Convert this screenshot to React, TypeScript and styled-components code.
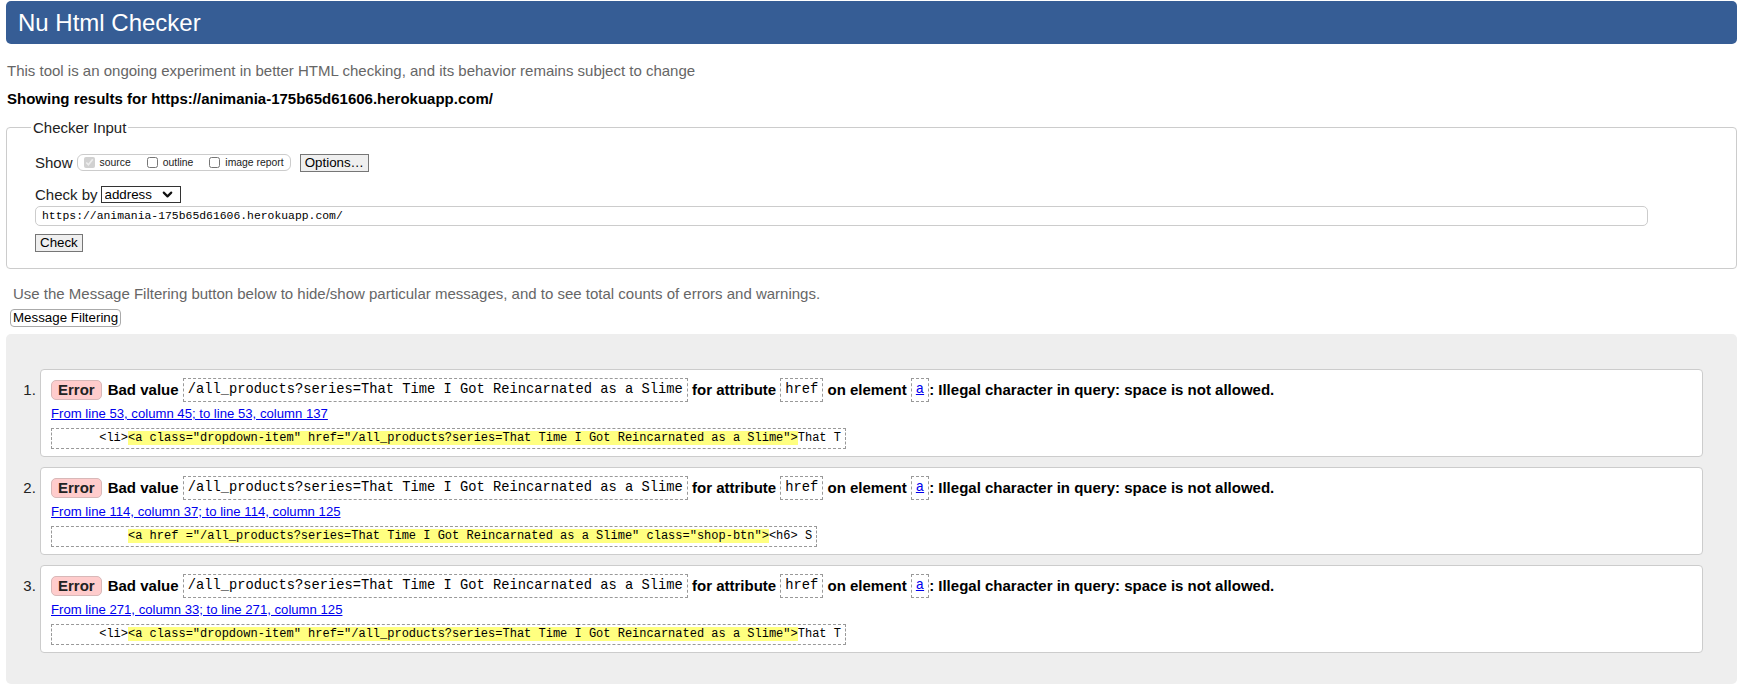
import React from 'react';
import styled, { createGlobalStyle } from 'styled-components';
import { ChevronDown } from 'lucide-react';

const GlobalStyle = createGlobalStyle`
  html, body {
    margin: 0;
    padding: 0;
    background: #fff;
  }
  body {
    padding: 1px 5px 0 6px;
    font-family: "Liberation Sans", Arial, sans-serif;
    font-size: 15px;
    color: #000;
  }
`;

const MONO = `"Liberation Mono", "DejaVu Sans Mono", monospace`;

const TitleBar = styled.header`
  height: 43px;
  border-radius: 5px;
  background: #365d95;
  color: #fff;
  display: flex;
  align-items: center;
  padding-left: 12px;
  h1 {
    margin: 0;
    font-size: 24px;
    font-weight: normal;
  }
`;

const Intro = styled.p<{ $bold?: boolean; $gap: number; $indent?: number }>`
  margin: ${(p) => p.$gap}px 0 0;
  padding-left: ${(p) => p.$indent ?? 1}px;
  line-height: 17px;
  color: ${(p) => (p.$bold ? '#000' : '#666')};
  font-weight: ${(p) => (p.$bold ? 'bold' : 'normal')};
`;

const InputSet = styled.fieldset`
  margin: 12px 0 0;
  padding: 17px 27px 16px 28px;
  border: 1px solid #ccc;
  border-radius: 4px;
  legend {
    padding: 0 2px;
    margin-left: -4px;
    line-height: 17px;
    color: #222;
  }
`;

const Row = styled.div<{ $gap?: number }>`
  display: flex;
  align-items: center;
  height: 19px;
  margin-top: ${(p) => p.$gap ?? 0}px;
  color: #222;
`;

const OptionGroup = styled.span`
  display: inline-flex;
  align-items: center;
  height: 15px;
  margin-left: 4px;
  padding: 0 6px;
  border: 1px solid #ccc;
  border-radius: 6px;
  label {
    display: inline-flex;
    align-items: center;
    font-size: 10.4px;
    color: #222;
    margin-right: 16px;
    &:last-child {
      margin-right: 0;
    }
  }
  input {
    width: 11px;
    height: 11px;
    margin: 0 5px 0 0;
  }
`;

const PlainButton = styled.button<{ $rounded?: boolean; $pad?: number }>`
  font-family: "Liberation Sans", Arial, sans-serif;
  font-size: 13.33px;
  height: 18px;
  padding: 0 ${(p) => p.$pad ?? 4}px;
  color: #000;
  line-height: 16px;
  border: 1px solid ${(p) => (p.$rounded ? '#aaa' : '#767676')};
  border-radius: ${(p) => (p.$rounded ? '4px' : '0')};
  background: ${(p) => (p.$rounded ? '#fff' : '#efefef')};
`;

const SelectBox = styled.span`
  display: inline-flex;
  align-items: center;
  width: 80px;
  height: 17px;
  box-sizing: border-box;
  margin-left: 3px;
  border: 1px solid #333;
  background: #fff;
  padding: 0 5px 0 3px;
  select {
    appearance: none;
    border: 0;
    padding: 0;
    flex: 1;
    min-width: 0;
    background: transparent;
    font-family: "Liberation Sans", Arial, sans-serif;
    font-size: 13.33px;
    color: #000;
    outline: none;
  }
`;

const UrlField = styled.input`
  display: block;
  box-sizing: border-box;
  width: 1613px;
  height: 20px;
  margin-top: 2px;
  padding: 0 6px;
  border: 1px solid #ccc;
  border-radius: 5px;
  font-family: ${MONO};
  font-size: 11.4px;
  color: #000;
`;

const Results = styled.section`
  margin-top: 7px;
  padding: 35px 34px 31px;
  background: #eee;
  border-radius: 5px;
`;

const MessageList = styled.ol`
  margin: 0;
  padding: 0;
`;

const Message = styled.li`
  background: #fff;
  border: 1px solid #ccc;
  border-radius: 4px;
  padding: 7px 10px;
  color: #222;
  & + & {
    margin-top: 10px;
  }
`;

const Headline = styled.p`
  margin: 0;
  line-height: 26px;
  font-weight: bold;
  color: #000;
`;

const Badge = styled.strong`
  display: inline-block;
  line-height: 18px;
  padding: 0 6px;
  margin-right: 6px;
  border: 1px solid #d8b8b8;
  border-radius: 5px;
  background: #fcc;
  color: #222;
`;

const Code = styled.code`
  display: inline-block;
  vertical-align: middle;
  margin-top: -2px;
  padding: 3px 4px;
  line-height: 16px;
  border: 1px dashed #999;
  font-family: ${MONO};
  font-size: 13.75px;
  font-weight: normal;
  color: #000;
  a {
    color: #00e;
  }
`;

const Location = styled.p`
  margin: 0;
  line-height: 22px;
  font-size: 13.15px;
  a {
    color: #00e;
  }
`;

const Extract = styled.pre`
  margin: 3px 0 0;
  padding: 0 4px;
  display: inline-block;
  height: 19px;
  line-height: 19px;
  border: 1px dashed #999;
  font-family: ${MONO};
  font-size: 12px;
  color: #000;
  b {
    font-weight: normal;
    background: #ffff80;
  }
`;

const BAD = '/all_products?series=That Time I Got Reincarnated as a Slime';

type Item = { loc: string; pre: string; hl: string; post: string };

const items: Item[] = [
  {
    loc: 'From line 53, column 45; to line 53, column 137',
    pre: '      <li>',
    hl: `<a class="dropdown-item" href="${BAD}">`,
    post: 'That T',
  },
  {
    loc: 'From line 114, column 37; to line 114, column 125',
    pre: '          ',
    hl: `<a href ="${BAD}" class="shop-btn">`,
    post: '<h6> S',
  },
  {
    loc: 'From line 271, column 33; to line 271, column 125',
    pre: '      <li>',
    hl: `<a class="dropdown-item" href="${BAD}">`,
    post: 'That T',
  },
];

export default function App() {
  return (
    <>
      <GlobalStyle />
      <TitleBar>
        <h1>Nu Html Checker</h1>
      </TitleBar>
      <Intro $gap={18}>
        This tool is an ongoing experiment in better HTML checking, and its behavior remains subject to change
      </Intro>
      <Intro $gap={11} $bold>
        Showing results for https://animania-175b65d61606.herokuapp.com/
      </Intro>
      <InputSet>
        <legend>Checker Input</legend>
        <Row>
          Show
          <OptionGroup>
            <label>
              <input type="checkbox" defaultChecked disabled />
              source
            </label>
            <label>
              <input type="checkbox" />
              outline
            </label>
            <label>
              <input type="checkbox" />
              image report
            </label>
          </OptionGroup>
          <PlainButton style={{ marginLeft: 9 }}>Options…</PlainButton>
        </Row>
        <Row $gap={13}>
          Check by
          <SelectBox>
            <select defaultValue="address">
              <option value="address">address</option>
              <option value="file">file upload</option>
              <option value="text">text input</option>
            </select>
            <ChevronDown size={15} strokeWidth={3.4} color="#111" />
          </SelectBox>
        </Row>
        <UrlField defaultValue="https://animania-175b65d61606.herokuapp.com/" />
        <PlainButton style={{ marginTop: 8 }}>Check</PlainButton>
      </InputSet>
      <Intro $gap={16} $indent={7}>
        Use the Message Filtering button below to hide/show particular messages, and to see total counts of errors and warnings.
      </Intro>
      <PlainButton $rounded $pad={2} style={{ marginTop: 7, marginLeft: 4 }}>
        Message Filtering
      </PlainButton>
      <Results>
        <MessageList>
          {items.map((m, i) => (
            <Message key={i}>
              <Headline>
                <Badge>Error</Badge>Bad value <Code>{BAD}</Code> for attribute <Code>href</Code> on element{' '}
                <Code>
                  <a href="#">a</a>
                </Code>
                : Illegal character in query: space is not allowed.
              </Headline>
              <Location>
                <a href="#">{m.loc}</a>
              </Location>
              <Extract>
                {m.pre}
                <b>{m.hl}</b>
                {m.post}
              </Extract>
            </Message>
          ))}
        </MessageList>
      </Results>
    </>
  );
}
